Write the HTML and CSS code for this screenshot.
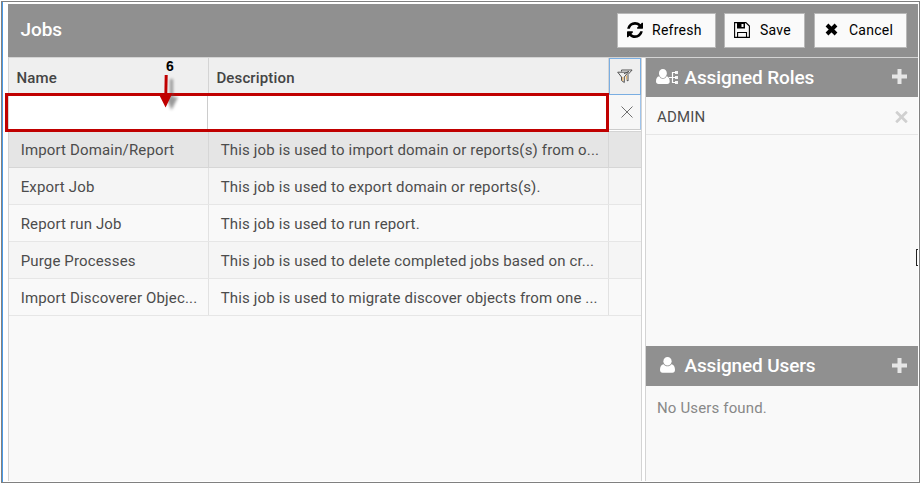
FILE: index.html
```html
<!DOCTYPE html>
<html lang="en">
<head>
<meta charset="utf-8">
<title>Jobs</title>
<link rel="stylesheet" href="styles.css">
</head>
<body>
<div class="window">
  <div class="content">
    <header class="titlebar">
      <h1>Jobs</h1>
      <div class="actions">
        <button class="btn refresh">
          <svg width="16" height="16" viewBox="0 0 1536 1536"><path d="M1511 928q0 5-1 7-64 268-268 434.500T764 1536q-146 0-282.500-55T238 1324l-129 129q-19 19-45 19t-45-19-19-45V960q0-26 19-45t45-19h448q26 0 45 19t19 45-19 45l-137 137q71 66 161 102t187 36q134 0 250-65t186-179q11-17 53-117 8-23 30-23h192q13 0 22.500 9.500t9.500 22.500zm25-800v448q0 26-19 45t-45 19h-448q-26 0-45-19t-19-45 19-45l138-138Q969 256 768 256q-134 0-250 65T332 500q-11 17-53 117-8 23-30 23H50q-13 0-22.500-9.500T18 608v-7q65-268 270-434.500T768 0q146 0 284 55.500T1297 212l130-129q19-19 45-19t45 19 19 45z"/></svg>
          <span>Refresh</span>
        </button>
        <button class="btn save">
          <svg width="16" height="16" viewBox="0 0 16 16"><path d="M.6.6h11.300l3.500 3.500v11.300H.6zM3.600 15V10.500h8.900V15" fill="none" stroke="#000" stroke-width="1.100"/><path d="M3 1h8v5.500H3zM7.500 2v3h2V2z" fill-rule="evenodd"/></svg>
          <span>Save</span>
        </button>
        <button class="btn cancel">
          <svg width="13" height="13" viewBox="0 0 13 13"><path d="M2 2l9 9M11 2l-9 9" stroke="#000" stroke-width="3.900"/></svg>
          <span>Cancel</span>
        </button>
      </div>
    </header>
    <main class="main">
      <section class="jobs">
        <div class="row head">
          <div class="cell">Name</div>
          <div class="cell">Description</div>
          <div class="cell filter-btn"><svg width="16" height="15" viewBox="0 0 16 15" fill="none" stroke="#555" stroke-width="1"><path d="M4.500 2.500V1h10.600l-4.100 4.500v6.500l-1.500-1"/><path d="M.7 3.200h10.500L7.300 8v5.500L4.500 11.500V8z"/><path d="M5.800 8v4M9.400 6.500v4" stroke="#e8b060"/><path d="M7 4.800L12 2.300"/></svg></div>
        </div>
        <div class="row inputs">
          <div class="cell"></div>
          <div class="cell"></div>
          <div class="cell clear-btn"><svg width="12" height="12" viewBox="0 0 12 12"><path d="M.5.5l11 11M11.500.5l-11 11" stroke="#707070" stroke-width="1"/></svg></div>
          <div class="highlight"></div>
        </div>
        <div class="row selected"><div class="cell">Import Domain/Report</div><div class="cell">This job is used to import domain or reports(s) from o...</div><div class="cell"></div></div>
        <div class="row alt"><div class="cell">Export Job</div><div class="cell">This job is used to export domain or reports(s).</div><div class="cell"></div></div>
        <div class="row"><div class="cell">Report run Job</div><div class="cell">This job is used to run report.</div><div class="cell"></div></div>
        <div class="row alt"><div class="cell">Purge Processes</div><div class="cell">This job is used to delete completed jobs based on cr...</div><div class="cell"></div></div>
        <div class="row"><div class="cell">Import Discoverer Objec...</div><div class="cell">This job is used to migrate discover objects from one ...</div><div class="cell"></div></div>
      </section>
      <aside class="side">
        <section class="roles">
          <div class="side-head">
            <svg class="lead" width="23" height="16" viewBox="0 0 23 16" fill="#fff"><path d="M6.900 0C9.300 0 10.800 1.800 10.800 4.200S9.200 9 6.900 9 3 6.600 3 4.200 4.500 0 6.900 0z"/><path d="M3.200 7.200C1 7.600 0 9.600 0 12.600 0 14.200 1 15 2.500 15h8.800c1.500 0 2.400-.8 2.400-2.400 0-3-1-5-3.100-5.400C9.700 8.900 8.500 9.700 6.900 9.700S4.100 8.900 3.200 7.200z"/><path d="M13 8.500h7M16.500 3v11M16.500 3.500H20M16.500 13.500H20" stroke="#fff" stroke-width="1.200" fill="none"/><path d="M19 2h3v3h-3zM19 7h3v3h-3zM19 12h3v3h-3z" opacity=".9"/></svg>
            <h2>Assigned Roles</h2>
            <svg class="plus" width="15" height="15" viewBox="0 0 15 15"><path d="M5.500 0h4v5.500H15v4H9.500V15h-4V9.500H0v-4h5.500z" fill="#e6e6e6"/></svg>
          </div>
          <div class="role"><span>ADMIN</span><svg width="13" height="12" viewBox="0 0 13 12"><path d="M1.200.7l10.600 10.600M11.800.7L1.200 11.300" stroke="#d0d0d0" stroke-width="2.700"/></svg></div>
        </section>
        <section class="users">
          <div class="side-head">
            <svg class="lead" width="23" height="16" viewBox="0 0 23 16" fill="#fff"><path d="M11.500 0C13.900 0 15.600 1.800 15.600 4.200S13.900 8.600 11.500 8.600 7.400 6.600 7.400 4.200 9.100 0 11.500 0z"/><path d="M7.700 7.300C5.200 7.600 4 9.800 4 12.800c0 2.100 1 3 2.500 3h10c1.500 0 2.500-.9 2.500-3 0-3-1.200-5.200-3.700-5.500-1 1.500-2.200 2-3.800 2s-2.800-.5-3.800-2z"/></svg>
            <h2>Assigned Users</h2>
            <svg class="plus" width="15" height="15" viewBox="0 0 15 15"><path d="M5.500 0h4v5.500H15v4H9.500V15h-4V9.500H0v-4h5.500z" fill="#e6e6e6"/></svg>
          </div>
          <p class="empty">No Users found.</p>
        </section>
      </aside>
    </main>
  </div>
  <div class="step">6</div>
  <svg class="arrow" width="28" height="44" viewBox="0 0 28 44"><g class="shadow"><path d="M12 6h3v18h5L13.500 37 8 24h4z"/></g><path d="M6.700 2h3l-.4 18h5.200L7.600 34.500.3 20h6.100z" fill="#c00000"/></svg>
  <div class="edge-handle"></div>
</div>
</body>
</html>
```

FILE: styles.css
```css
* { box-sizing: border-box; }
body {
  margin: 0;
  background: #fff;
  overflow: hidden;
  font: 15px/18px Roboto, sans-serif;
  letter-spacing: 0.15px;
  color: #4c4c4c;
}
h1, h2, p { margin: 0; }
svg { display: block; flex: none; }
.window {
  position: relative;
  width: 919px;
  height: 482px;
  margin: 1px 0 0 1px;
  border: 1px solid #808080;
}
.content {
  height: 480px;
  padding: 2px 1px 1px 5px;
  border-left: 1px solid #4a9be8;
}
.titlebar {
  display: flex;
  justify-content: space-between;
  height: 53px;
  padding: 9px 11px 0 12.5px;
  background: #909090;
}
h1 {
  padding-top: 6px;
  font-size: 19px;
  line-height: 22px;
  font-weight: 500;
  letter-spacing: -0.1px;
  color: #fff;
}
.actions { display: flex; gap: 8px; }
.btn {
  display: flex;
  align-items: center;
  height: 35px;
  padding: 0 0 2px 9px;
  border: 1px solid #b8b8b8;
  background: #fafafa;
  color: #000;
  font: 14px/18px Roboto, sans-serif;
  letter-spacing: 0.25px;
}
.btn span { padding-top: 1px; }
.refresh { width: 99px; gap: 9px; }
.save { width: 81px; gap: 10px; }
.cancel { width: 93px; gap: 11px; padding-left: 10px; margin-left: 1px; }
.main {
  display: flex;
  gap: 3px;
  height: 424px;
  border-top: 1px solid #d4d4d4;
}
.jobs {
  width: 634px;
  background: #f9f9f9;
  border: solid #d4d4d4;
  border-width: 0 1px;
}
.row {
  position: relative;
  display: grid;
  grid-template-columns: 200px 400px 32px;
  height: 37px;
  border-bottom: 1px solid #e6e6e6;
}
.cell {
  display: flex;
  align-items: center;
  padding: 2px 0 0 11.7px;
  border-right: 1px solid #e2e2e2;
  white-space: nowrap;
}
.cell:last-child { border-right: 0; }
.head {
  background: #efefef;
  font-weight: 500;
  color: #444;
}
.head .cell { padding: 3px 0 0 7.4px; border-color: #d4d4d4; }
.head .filter-btn {
  height: 37px;
  padding: 0 0 0 7px;
  border: 1px solid #7aaee2;
}
.inputs { background: #fff; border-bottom-color: #d4d4d4; }
.inputs .cell { border-color: #ccc; }
.inputs .cell:first-child { width: 199px; }
.inputs .clear-btn {
  height: 35px;
  padding-top: 0;
  background: #f7f7f7;
  border: solid #ccc;
  border-width: 0 1px 1px 0;
  border-right-color: #9fc3ea;
}
.highlight {
  position: absolute;
  left: -4px;
  top: -2px;
  width: 604px;
  height: 39px;
  border: 3px solid #c00000;
}
.selected { height: 36px; background: #e5e5e5; border-color: #d6d6d6; }
.selected .cell { padding-top: 1px; border-color: #d6d6d6; }
.alt { background: #f5f5f5; }
.side {
  display: flex;
  flex-direction: column;
  width: 273px;
  border-left: 1px solid #d4d4d4;
  background: #f9f9f9;
}
.roles { height: 288px; }
.side-head {
  display: flex;
  align-items: center;
  height: 39px;
  padding: 0 11px 2px 10px;
  background: #909090;
  color: #fff;
}
.users .side-head { height: 40px; }
h2 {
  flex: 1;
  padding: 2px 0 0 5.5px;
  font-size: 19px;
  line-height: 22px;
  font-weight: 500;
  letter-spacing: -0.13px;
}
.role {
  display: flex;
  align-items: center;
  justify-content: space-between;
  height: 38px;
  padding: 2px 10px 0 11px;
  border-bottom: 1px solid #e6e6e6;
}
.empty { padding: 13px 11px; color: #888; }
.step {
  position: absolute;
  left: 164px;
  top: 56px;
  font: bold 14px/16px "Liberation Sans", sans-serif;
  color: #000;
}
.arrow { position: absolute; left: 156px; top: 71px; }
.shadow { fill: #555; opacity: 0.6; filter: blur(1.5px); }
.edge-handle {
  position: absolute;
  left: 914px;
  top: 247px;
  width: 2px;
  height: 17px;
  border: 1px solid #222;
  border-right: 0;
}
```
